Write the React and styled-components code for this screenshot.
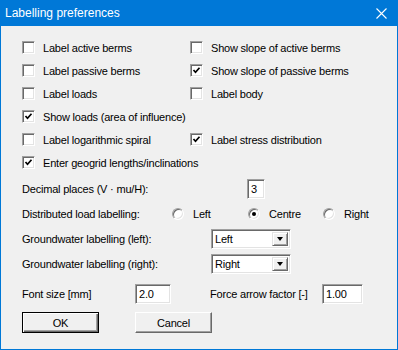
import React from 'react';
import styled, { createGlobalStyle } from 'styled-components';

const GlobalStyle = createGlobalStyle`
  html, body {
    margin: 0;
    padding: 0;
    background: #ffffff;
  }
  body {
    font-family: "Liberation Sans", Arial, sans-serif;
  }
`;

const Window = styled.div`
  width: 398px;
  height: 350px;
  box-sizing: border-box;
  border: 1px solid #0078d7;
  border-top: none;
  background: #f0f0f0;
  display: flex;
  flex-direction: column;
  color: #000;
  font-size: 11px;
  letter-spacing: -0.2px;
`;

const TitleBar = styled.div`
  height: 26px;
  flex-shrink: 0;
  background: #0078d7;
  color: #fff;
  display: flex;
  align-items: center;
  justify-content: space-between;
  padding: 0 10px 0 4px;
  font-size: 12px;
  letter-spacing: 0;
`;

const CloseIcon = () => (
  <svg width="11" height="11" viewBox="0 0 11 11">
    <path d="M0.5 0.5 L10.5 10.5 M10.5 0.5 L0.5 10.5" stroke="#fff" strokeWidth="1.1" />
  </svg>
);

const Body = styled.div`
  padding: 10px 0 0 21px;
  display: flex;
  flex-direction: column;
`;

const CheckGrid = styled.div`
  display: grid;
  grid-template-columns: 168px auto;
  grid-auto-rows: 23px;
`;

const CheckItem = styled.label`
  display: flex;
  align-items: center;
  gap: 8px;
  white-space: nowrap;
  grid-column: ${({ $wide }) => ($wide ? '1 / span 2' : 'auto')};
`;

// sunken 3D edge used by checkbox, radio, edit and combo
const sunken = `
  background: #fff;
  border: 1px solid;
  border-color: #a0a0a0 #ffffff #ffffff #a0a0a0;
  box-shadow: inset 1px 1px #696969, inset -1px -1px #e3e3e3;
  box-sizing: border-box;
`;

const Box = styled.span`
  ${sunken}
  width: 13px;
  height: 13px;
  display: flex;
  align-items: center;
  justify-content: center;
  flex-shrink: 0;
`;

const Checkbox = ({ checked, children, wide }) => (
  <CheckItem $wide={wide}>
    <Box>
      {checked && (
        <svg width="9" height="9" viewBox="0 0 9 9">
          <polyline points="1.5,4 3.5,6.3 7.5,1.8" fill="none" stroke="#000" strokeWidth="1.7" />
        </svg>
      )}
    </Box>
    {children}
  </CheckItem>
);

const Row = styled.div`
  height: ${({ $h }) => $h || 25}px;
  margin-top: ${({ $mt }) => $mt || 0}px;
  display: flex;
  align-items: center;
`;

const Label = styled.span`
  width: ${({ $w }) => $w}px;
  flex-shrink: 0;
  white-space: nowrap;
`;

const Edit = styled.div`
  ${sunken}
  width: ${({ $w }) => $w}px;
  height: 20px;
  padding: 0 3px;
  display: flex;
  align-items: center;
  flex-shrink: 0;
`;

const RadioOption = styled.label`
  width: ${({ $w }) => $w}px;
  display: flex;
  align-items: center;
  gap: 9px;
`;

const RadioCircle = styled.span`
  ${sunken}
  width: 12px;
  height: 12px;
  border-radius: 50%;
  display: flex;
  align-items: center;
  justify-content: center;
  &::after {
    content: '';
    width: 4px;
    height: 4px;
    border-radius: 50%;
    background: ${({ $on }) => ($on ? '#000' : 'transparent')};
  }
`;

const Radio = ({ on, w, children }) => (
  <RadioOption $w={w}>
    <RadioCircle $on={on} />
    {children}
  </RadioOption>
);

const Combo = styled.div`
  ${sunken}
  width: 80px;
  height: 20px;
  display: flex;
  align-items: center;
  justify-content: space-between;
  padding: 0 2px 0 3px;
`;

const DropButton = styled.span`
  width: 16px;
  height: 14px;
  box-sizing: border-box;
  background: #f0f0f0;
  border: 1px solid;
  border-color: #e3e3e3 #696969 #696969 #e3e3e3;
  box-shadow: inset 1px 1px #fff, inset -1px -1px #a0a0a0;
  display: flex;
  align-items: center;
  justify-content: center;
  &::after {
    content: '';
    border-left: 3.5px solid transparent;
    border-right: 3.5px solid transparent;
    border-top: 4px solid #000;
  }
`;

const Gap = styled.span`
  width: ${({ $w }) => $w}px;
  flex-shrink: 0;
`;

const ButtonRow = styled.div`
  display: flex;
  gap: 36px;
  margin-top: 6px;
`;

const Button = styled.button`
  width: 77px;
  height: 21px;
  font: inherit;
  font-size: 11px;
  letter-spacing: -0.2px;
  color: #000;
  padding: 0;
  background: #f0f0f0;
  border: 1px solid;
  border-color: ${({ $default }) => ($default ? '#000' : '#fff #696969 #696969 #fff')};
  box-shadow: ${({ $default }) =>
    $default
      ? 'inset 1px 1px #fff, inset -1px -1px #696969, inset -2px -2px #a0a0a0'
      : 'inset -1px -1px #a0a0a0'};
`;

export default function App() {
  return (
    <>
      <GlobalStyle />
      <Window>
        <TitleBar>
          <span>Labelling preferences</span>
          <CloseIcon />
        </TitleBar>
        <Body>
          <CheckGrid>
            <Checkbox>Label active berms</Checkbox>
            <Checkbox>Show slope of active berms</Checkbox>
            <Checkbox>Label passive berms</Checkbox>
            <Checkbox checked>Show slope of passive berms</Checkbox>
            <Checkbox>Label loads</Checkbox>
            <Checkbox>Label body</Checkbox>
            <Checkbox checked wide>Show loads (area of influence)</Checkbox>
            <Checkbox>Label logarithmic spiral</Checkbox>
            <Checkbox checked>Label stress distribution</Checkbox>
            <Checkbox checked wide>Enter geogrid lengths/inclinations</Checkbox>
          </CheckGrid>

          <Row $mt={2}>
            <Label $w={225}>Decimal places (V · mu/H):</Label>
            <Edit $w={18}>3</Edit>
          </Row>
          <Row>
            <Label $w={150}>Distributed load labelling:</Label>
            <Radio w={76}>Left</Radio>
            <Radio w={75} on>Centre</Radio>
            <Radio w={60}>Right</Radio>
          </Row>
          <Row>
            <Label $w={189}>Groundwater labelling (left):</Label>
            <Combo>
              Left
              <DropButton />
            </Combo>
          </Row>
          <Row>
            <Label $w={189}>Groundwater labelling (right):</Label>
            <Combo>
              Right
              <DropButton />
            </Combo>
          </Row>
          <Row $mt={5}>
            <Label $w={113}>Font size [mm]</Label>
            <Edit $w={36}>2.0</Edit>
            <Gap $w={39} />
            <Label $w={112}>Force arrow factor [-]</Label>
            <Edit $w={41}>1.00</Edit>
          </Row>
          <ButtonRow>
            <Button $default>OK</Button>
            <Button>Cancel</Button>
          </ButtonRow>
        </Body>
      </Window>
    </>
  );
}
